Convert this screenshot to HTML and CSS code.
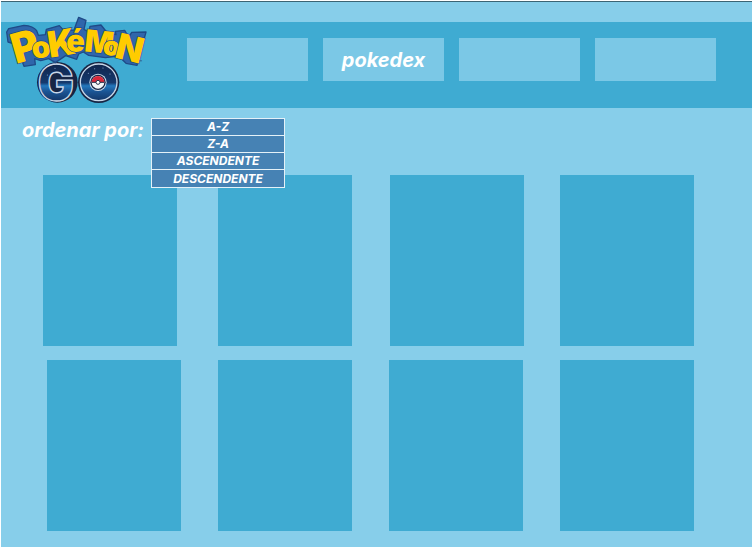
FILE: index.html
```html
<!DOCTYPE html>
<html lang="es">
<head>
<meta charset="utf-8">
<meta name="viewport" content="width=device-width, initial-scale=1">
<title>Pokémon GO – pokedex</title>
<link rel="stylesheet" href="styles.css">
</head>
<body>
<div class="page">
  <header class="header">
    <a class="logo" href="#" aria-label="Pokémon GO">
      <svg viewBox="0 0 450 300" width="150" height="100">
        <defs>
          <linearGradient id="night" gradientUnits="userSpaceOnUse" x1="0" y1="158" x2="0" y2="278">
            <stop offset="0" stop-color="#10234a"/>
            <stop offset=".5" stop-color="#153a6e"/>
            <stop offset=".58" stop-color="#2478bd"/>
            <stop offset=".72" stop-color="#1b5595"/>
            <stop offset="1" stop-color="#12305f"/>
          </linearGradient>
        </defs>
        <!-- GO -->
        <circle cx="172" cy="217" r="61" fill="#172544"/>
        <circle cx="296" cy="217" r="62" fill="#172544"/>
        <circle cx="296" cy="217" r="55" fill="url(#night)" stroke="#c9d7e8" stroke-width="4"/>
        <text class="go" x="113" y="269">G</text>
        <g fill="#9fc0e2">
          <circle cx="142" cy="195" r="1.5"/><circle cx="165" cy="175" r="1.5"/><circle cx="265" cy="190" r="1.5"/>
          <circle cx="284" cy="176" r="1.5"/><circle cx="309" cy="174" r="1.5"/><circle cx="330" cy="192" r="1.5"/>
        </g>
        <circle cx="294" cy="217" r="26" fill="#c9d7e8"/>
        <circle cx="294" cy="217" r="23" fill="#172544"/>
        <circle cx="294" cy="217" r="19" fill="#f4f6f8"/>
        <path d="M275 217a19 19 0 0 1 38 0z" fill="#d9283b"/>
        <path d="M275 217h38" stroke="#26304a" stroke-width="3"/>
        <circle cx="294" cy="217" r="6" fill="#fff" stroke="#26304a" stroke-width="3"/>
        <!-- plate behind the wordmark -->
        <path d="M20 66 26 56 72 46Q100 48 110 62L115 76 136 74 139 58 178 47 192 62 222 60 236 22 258 31 252 58 266 66 270 49 303 45 320 66 348 74 346 64 374 61 386 82 395 67 438 66 411 166 378 160 356 138 316 143 266 136 250 126 236 132 230 148 197 137 166 158 146 146 122 152 104 146 106 164 72 169 47 103 24 96z" fill="#2f66ab" stroke="#1f4a87" stroke-width="4" stroke-linejoin="round"/>
        <g class="word">
          <text font-size="124" transform="translate(48 162) rotate(-16)">P</text>
          <text font-size="90" transform="translate(99 147) rotate(-8)">o</text>
          <text font-size="108" transform="translate(149 143) rotate(-9)">K</text>
          <text font-size="92" transform="translate(198 124) rotate(2)">é</text>
          <text font-size="92" transform="translate(251 124) rotate(6)">M</text>
          <text font-size="80" transform="translate(306 133) rotate(8)">o</text>
          <text font-size="106" transform="translate(341 142) rotate(14)">N</text>
        </g>
        <text class="tm" x="416" y="162">™</text>
      </svg>
    </a>
    <nav class="nav">
      <button class="tab" type="button"></button>
      <button class="tab" type="button">pokedex</button>
      <button class="tab" type="button"></button>
      <button class="tab" type="button"></button>
    </nav>
  </header>
  <main>
    <div class="sort">
      <span class="sort-label" id="sort-label">ordenar por:</span>
      <div class="menu-anchor">
        <div class="menu" role="group" aria-labelledby="sort-label">
          <button type="button">A-Z</button>
          <button type="button">Z-A</button>
          <button type="button">ASCENDENTE</button>
          <button type="button">DESCENDENTE</button>
        </div>
      </div>
    </div>
    <section class="cards">
      <div class="row row-first">
        <article class="card"></article>
        <article class="card"></article>
        <article class="card"></article>
        <article class="card"></article>
      </div>
      <div class="row">
        <article class="card"></article>
        <article class="card"></article>
        <article class="card"></article>
        <article class="card"></article>
      </div>
    </section>
  </main>
</div>
</body>
</html>
```
FILE: styles.css
```css
* {
  box-sizing: border-box;
}

body {
  margin: 0;
  background: #fff;
  font-family: Inter, "Liberation Sans", sans-serif;
  font-weight: 700;
  font-style: italic;
  color: #fff;
}

button {
  font: inherit;
  color: inherit;
  border: 0;
  padding: 0;
  cursor: pointer;
}

.page {
  min-height: calc(100vh - 1px);
  margin: 1px 0 0 1px;
  padding: 20px 0 15px;
  border-top: 1px solid #3c6474;
  background: #87ceea;
}

.header {
  position: relative;
  padding: 16px 36px 27px 186px;
  background: #3fabd2;
}

.logo {
  position: absolute;
  left: -1px;
  top: -12px;
}

.logo svg {
  display: block;
  overflow: visible;
}

.word text {
  font-family: Inter, sans-serif;
  font-style: normal;
  font-weight: 900;
  fill: #fc0;
  stroke: #1f4a87;
  stroke-width: 4px;
  paint-order: stroke;
}

.go {
  font-family: Inter, sans-serif;
  font-size: 144px;
  font-style: normal;
  font-weight: 900;
  fill: url(#night);
  stroke: #c9d7e8;
  stroke-width: 4px;
}

.tm {
  font-size: 14px;
  fill: #31597e;
}

.nav {
  display: flex;
  gap: 15px;
}

.tab {
  flex: 1;
  height: 43px;
  background: #7bc8e6;
  font-size: 20px;
}

.sort {
  display: flex;
  gap: 7px;
  padding: 10px 0 0 21px;
}

.sort-label {
  font-size: 20px;
  line-height: 24px;
}

.menu-anchor {
  position: relative;
}

.menu {
  position: absolute;
  top: 0;
  left: 0;
  display: grid;
  grid-template-rows: 16px 16px 16px 17px;
  gap: 1px;
  width: 134px;
  padding: 1px;
  background: #e4f1f8;
}

.menu button {
  background: #4682b4;
  font-size: 12px;
  line-height: 16px;
}

.cards {
  display: grid;
  gap: 14px;
  padding: 33px 58px 0 46px;
}

.row {
  display: grid;
  grid-template-columns: 171fr 171fr 171fr 134px;
}

.row-first {
  grid-template-columns: 175fr 172fr 170fr 134px;
  margin-left: -4px;
}

.card {
  width: 134px;
  height: 171px;
  background: #3fabd2;
}
```
